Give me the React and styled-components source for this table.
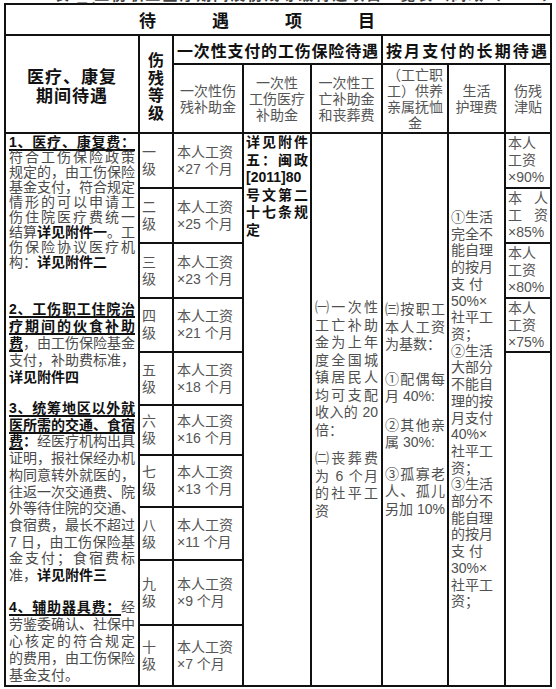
import React from 'react';
import styled, { createGlobalStyle } from 'styled-components';

const GlobalStyle = createGlobalStyle`
  html, body {
    margin: 0;
    padding: 0;
    background: #ffffff;
  }
  body {
    font-family: "Liberation Sans", "Noto Sans CJK SC", sans-serif;
  }
`;

const Page = styled.div`
  width: 556px;
  padding-left: 4px;
  box-sizing: border-box;
`;

const Caption = styled.div`
  height: 3px;
  overflow: hidden;
  padding-left: 50px;
  font-size: 15px;
  font-weight: 700;
  line-height: 15px;
  color: #444;

  span {
    display: block;
    margin-top: -13px;
    letter-spacing: 2px;
  }
`;

const Sheet = styled.table`
  border-collapse: collapse;
  table-layout: fixed;
  width: 546px;
  font-size: 14px;
  color: #4a4a4a;
`;

const Row = styled.tr`
  height: ${(p) => p.$h}px;
`;

const Cell = styled.td`
  border: 2px solid #111;
  padding: 0 2px;
  vertical-align: ${(p) => p.$valign || 'middle'};
  line-height: ${(p) => p.$lh || 17}px;
  overflow: hidden;
`;

const MainHead = styled.th`
  border: 2px solid #111;
  padding: 0 0 0 133px;
  text-align: left;
  font-size: 17px;
  font-weight: 700;
  letter-spacing: 56px;
  color: #111;
`;

const SideHead = styled.th`
  border: 2px solid #111;
  padding: 6px 0 0;
  font-size: ${(p) => p.$size}px;
  font-weight: 700;
  letter-spacing: ${(p) => p.$spacing || 0}px;
  line-height: ${(p) => p.$lh}px;
  color: #111;
  text-align: center;
`;

const GroupHead = styled.th`
  border: 2px solid #111;
  padding: 0 3px;
  font-size: 16px;
  font-weight: 700;
  color: #111;
  text-align: justify;
  text-align-last: justify;
`;

const SubHead = styled.th`
  border: 2px solid #111;
  padding: 0 1px;
  font-weight: 400;
  font-size: 14px;
  line-height: 16px;
  color: #555;
  text-align: center;
`;

const ScopeCell = styled(Cell)`
  padding: 1px 3px 0 3px;
`;

const GradeCell = styled(Cell)`
  padding: 0 0 0 2px;
  color: #555;
`;

const PayCell = styled(Cell)`
  padding: 0 0 0 3px;
  color: #555;
`;

const NoteCell = styled(Cell)`
  padding: 0 2px;
  font-weight: 700;
  color: #111;
`;

const RuleCell = styled(Cell)`
  padding: 0 ${(p) => p.$pad || 3}px;
  color: #505050;
`;

const AllowanceCell = styled(Cell)`
  padding: 0 2px;
  color: #555;
`;

const Line = styled.span`
  display: block;
  text-align: ${(p) => (p.$fill ? 'justify' : 'left')};
  text-align-last: ${(p) => (p.$fill ? 'justify' : 'auto')};
`;

const Block = styled.div`
  margin-top: ${(p) => p.$gap || 0}px;
  line-height: ${(p) => p.$lh}px;
`;

const Strong = styled.b`
  font-weight: 700;
  color: #111;
`;

const Mark = styled(Strong)`
  text-decoration: underline;
  text-decoration-thickness: 1.5px;
  text-underline-offset: 2px;
`;

const widths = [134, 34, 70, 68, 71, 66, 57, 46];

const grades = [
  { name: '一', months: 27, h: 55, allowance: '90%' },
  { name: '二', months: 25, h: 55, allowance: '85%', spread: true },
  { name: '三', months: 23, h: 55, allowance: '80%' },
  { name: '四', months: 21, h: 54, allowance: '75%' },
  { name: '五', months: 18, h: 53 },
  { name: '六', months: 16, h: 50 },
  { name: '七', months: 13, h: 52 },
  { name: '八', months: 11, h: 53 },
  { name: '九', months: 9, h: 65 },
  { name: '十', months: 7, h: 61 },
];

const careLines = [
  '①生活', '完全不', '能自理', '的按月', '支 付', '50%×', '社平工', '资；',
  '②生活', '大部分', '不能自', '理的按', '月支付', '40%×', '社平工', '资；',
  '③生活', '部分不', '能自理', '的按月', '支 付', '30%×', '社平工', '资；',
];

const Scope = () => (
  <ScopeCell rowSpan={10} $valign="top">
    <Block $lh={15}>
      <Line $fill><Mark>1、医疗、康复费：</Mark></Line>
      <Line $fill>符合工伤保险政策</Line>
      <Line $fill>规定的，由工伤保险</Line>
      <Line $fill>基金支付，符合规定</Line>
      <Line $fill>情形的可以申请工</Line>
      <Line $fill>伤住院医疗费统一</Line>
      <Line $fill>结算<Strong>详见附件一</Strong>。工</Line>
      <Line $fill>伤保险协议医疗机</Line>
      <Line>构：<Strong>详见附件二</Strong></Line>
    </Block>
    <Block $gap={31} $lh={17}>
      <Line $fill><Mark>2、工伤职工住院治</Mark></Line>
      <Line $fill><Mark>疗期间的伙食补助</Mark></Line>
      <Line $fill><Mark>费</Mark>，由工伤保险基金</Line>
      <Line $fill>支付，补助费标准，</Line>
      <Line><Strong>详见附件四</Strong></Line>
    </Block>
    <Block $gap={14} $lh={16.7}>
      <Line $fill><Mark>3、统筹地区以外就</Mark></Line>
      <Line $fill><Mark>医所需的交通、食宿</Mark></Line>
      <Line $fill><Mark>费</Mark><Strong>：</Strong>经医疗机构出具</Line>
      <Line $fill>证明，报社保经办机</Line>
      <Line $fill>构同意转外就医的，</Line>
      <Line $fill>往返一次交通费、院</Line>
      <Line $fill>外等待住院的交通、</Line>
      <Line $fill>食宿费，最长不超过</Line>
      <Line $fill>7 日，由工伤保险基</Line>
      <Line $fill>金支付；食宿费标</Line>
      <Line>准，<Strong>详见附件三</Strong></Line>
    </Block>
    <Block $gap={15} $lh={17}>
      <Line $fill><Mark>4、辅助器具费：</Mark>经</Line>
      <Line $fill>劳鉴委确认、社保中</Line>
      <Line $fill>心核定的符合规定</Line>
      <Line $fill>的费用，由工伤保险</Line>
      <Line>基金支付。</Line>
    </Block>
  </ScopeCell>
);

const SharedColumns = () => (
  <>
    <NoteCell rowSpan={10} $valign="top" $lh={17.5}>
      <Line $fill>详见附件</Line>
      <Line $fill>五：闽政</Line>
      <Line $fill>[2011]80</Line>
      <Line $fill>号文第二</Line>
      <Line $fill>十七条规</Line>
      <Line>定</Line>
    </NoteCell>
    <RuleCell rowSpan={10}>
      <Block $lh={17.5}>
        <Line $fill>㈠一次性</Line>
        <Line $fill>工亡补助</Line>
        <Line $fill>金为上年</Line>
        <Line $fill>度全国城</Line>
        <Line $fill>镇居民人</Line>
        <Line $fill>均可支配</Line>
        <Line $fill>收入的 20</Line>
        <Line>倍：</Line>
      </Block>
      <Block $gap={11} $lh={17.5}>
        <Line $fill>㈡丧葬费</Line>
        <Line $fill>为 6 个月</Line>
        <Line $fill>的社平工</Line>
        <Line>资</Line>
      </Block>
    </RuleCell>
    <RuleCell rowSpan={10} $pad={2}>
      <Block $lh={17.5}>
        <Line $fill>㈢按职工</Line>
        <Line $fill>本人工资</Line>
        <Line>为基数：</Line>
      </Block>
      <Block $gap={17} $lh={17.5}>
        <Line $fill>①配偶每</Line>
        <Line>月 40%:</Line>
      </Block>
      <Block $gap={11} $lh={17.5}>
        <Line $fill>②其他亲</Line>
        <Line>属 30%:</Line>
      </Block>
      <Block $gap={14} $lh={17.5}>
        <Line $fill>③孤寡老</Line>
        <Line $fill>人、孤儿</Line>
        <Line>另加 10%</Line>
      </Block>
    </RuleCell>
    <RuleCell rowSpan={10} $pad={2}>
      <Block $lh={16.7}>
        {careLines.map((text, i) => (
          <Line key={i}>{text}</Line>
        ))}
      </Block>
    </RuleCell>
  </>
);

const App = () => {
  return (
    <Page>
      <GlobalStyle />
      <Caption>
        <span>表一 工伤职工医疗期间及伤残等级待遇项目一览表（闽政〔2011〕80号）</span>
      </Caption>
      <Sheet>
        <colgroup>
          {widths.map((w, i) => (
            <col key={i} style={{ width: w }} />
          ))}
        </colgroup>
        <thead>
          <Row $h={31}>
            <MainHead colSpan={8}>待遇项目</MainHead>
          </Row>
          <Row $h={29}>
            <SideHead rowSpan={2} $size={17} $lh={19} $spacing={1}>
              医疗、康复
              <br />
              期间待遇
            </SideHead>
            <SideHead rowSpan={2} $size={16} $lh={17.5}>
              伤<br />残<br />等<br />级
            </SideHead>
            <GroupHead colSpan={3}>一次性支付的工伤保险待遇</GroupHead>
            <GroupHead colSpan={3}>按月支付的长期待遇</GroupHead>
          </Row>
          <Row $h={69}>
            <SubHead>一次性伤<br />残补助金</SubHead>
            <SubHead>一次性<br />工伤医疗<br />补助金</SubHead>
            <SubHead>一次性工<br />亡补助金<br />和丧葬费</SubHead>
            <SubHead>（工亡职<br />工）供养<br />亲属抚恤<br />金</SubHead>
            <SubHead>生活<br />护理费</SubHead>
            <SubHead>伤残<br />津贴</SubHead>
          </Row>
        </thead>
        <tbody>
          {grades.map((g, i) => (
            <Row key={g.name} $h={g.h}>
              {i === 0 && <Scope />}
              <GradeCell>
                <Line>{g.name}</Line>
                <Line>级</Line>
              </GradeCell>
              <PayCell>
                <Line>本人工资</Line>
                <Line>×{g.months} 个月</Line>
              </PayCell>
              {i === 0 && <SharedColumns />}
              {g.allowance && (
                <AllowanceCell>
                  <Line $fill={g.spread}>本人</Line>
                  <Line $fill={g.spread}>工资</Line>
                  <Line>×{g.allowance}</Line>
                </AllowanceCell>
              )}
              {i === 4 && <AllowanceCell rowSpan={6} />}
            </Row>
          ))}
        </tbody>
      </Sheet>
    </Page>
  );
};

export default App;
